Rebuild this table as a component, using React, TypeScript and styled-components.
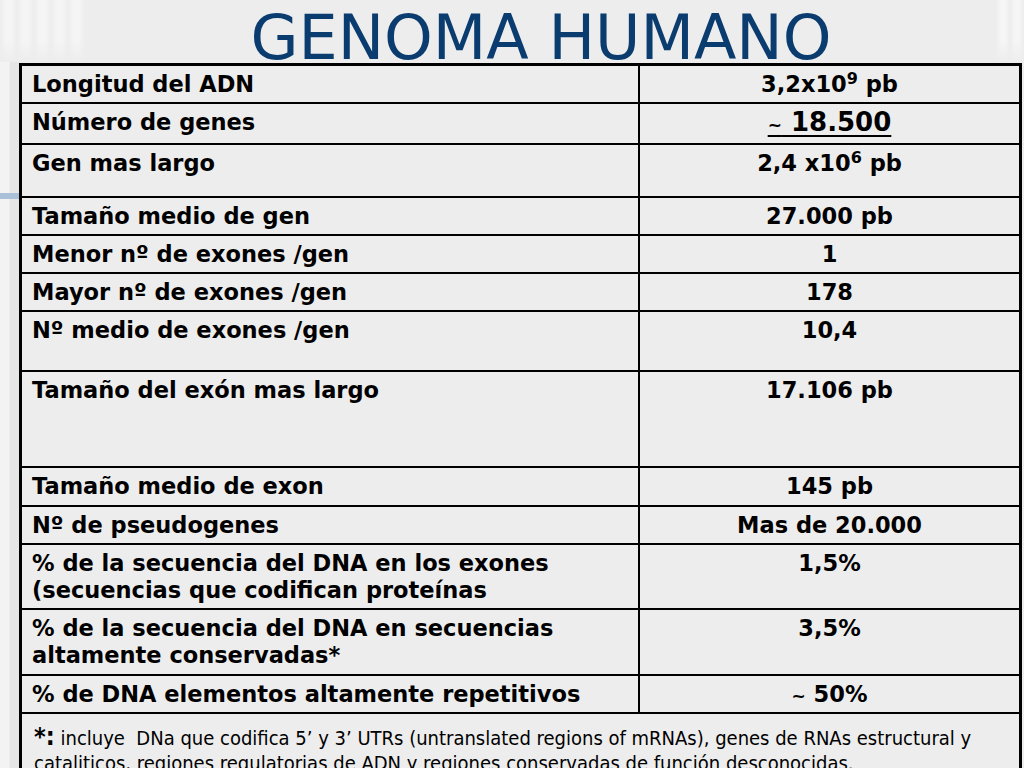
import styled, { createGlobalStyle } from 'styled-components';

type Row = {
    label: React.ReactNode;
    value: React.ReactNode;
    height: number;
};

const getRows = (): Row[] => [
    { label: 'Longitud del ADN', value: <>3,2x10<sup>9</sup> pb</>, height: 38 },
    {
        label: 'Número de genes',
        value: (
            <StyledBigValue>
                <StyledTilde>~</StyledTilde> 18.500
            </StyledBigValue>
        ),
        height: 41,
    },
    { label: 'Gen mas largo', value: <>2,4 x10<sup>6</sup> pb</>, height: 53 },
    { label: 'Tamaño medio de gen', value: '27.000 pb', height: 38 },
    { label: 'Menor nº de exones /gen', value: '1', height: 38 },
    { label: 'Mayor nº de exones /gen', value: '178', height: 38 },
    { label: 'Nº medio de exones /gen', value: '10,4', height: 60 },
    { label: 'Tamaño del exón mas largo', value: '17.106 pb', height: 96 },
    { label: 'Tamaño medio de exon', value: '145 pb', height: 39 },
    { label: 'Nº de pseudogenes', value: 'Mas de 20.000', height: 38 },
    {
        label: (
            <>
                % de la secuencia del DNA en los exones
                <br />
                (secuencias que codifican proteínas
            </>
        ),
        value: '1,5%',
        height: 65,
    },
    {
        label: (
            <>
                % de la secuencia del DNA en secuencias
                <br />
                altamente conservadas*
            </>
        ),
        value: '3,5%',
        height: 66,
    },
    {
        label: '% de DNA elementos altamente repetitivos',
        value: (
            <>
                <StyledTilde>~</StyledTilde> 50%
            </>
        ),
        height: 38,
    },
];

const App: React.FC = () => {
    const rows = getRows();

    return (
        <>
            <GlobalStyle />
            <StyledSlide>
                <StyledTitle>GENOMA HUMANO</StyledTitle>
                <StyledTable>
                    {rows.map((row, i) => (
                        <StyledRow key={i} height={row.height}>
                            <StyledLabelCell>{row.label}</StyledLabelCell>
                            <StyledValueCell>{row.value}</StyledValueCell>
                        </StyledRow>
                    ))}
                    <StyledNote>
                        <StyledStar>*:</StyledStar> incluye&nbsp; DNa que codifica 5’ y 3’ UTRs (untranslated regions of
                        mRNAs), genes de RNAs estructural y
                        <br />
                        cataliticos, regiones regulatorias de ADN y regiones conservadas de función desconocidas.
                    </StyledNote>
                </StyledTable>
            </StyledSlide>
        </>
    );
};

const GlobalStyle = createGlobalStyle`
    html, body {
        margin: 0;
        padding: 0;
        background: #ededed;
    }
`;

const StyledSlide = styled.div`
    position: relative;
    width: 1024px;
    height: 768px;
    overflow: hidden;
    background-color: #ededed;
    background-image:
        linear-gradient(#a9c0d8, #a9c0d8),
        linear-gradient(to bottom, rgba(237, 237, 237, 0) 40px, #ededed 62px),
        repeating-linear-gradient(to right, #ededed 0px, #f5f5f5 6px, #f5f5f5 11px, #ededed 17px),
        linear-gradient(to bottom, rgba(237, 237, 237, 0) 40px, #ededed 62px),
        repeating-linear-gradient(to right, #ededed 0px, #f6f6f6 5px, #f6f6f6 9px, #ededed 14px),
        linear-gradient(to right, #f3f3f3 0px, #f3f3f3 9px, #e6e6e6 10px, #e6e6e6 19px);
    background-size:
        19px 6px,
        86px 62px,
        86px 62px,
        28px 62px,
        28px 62px,
        19px 100%;
    background-position:
        0 193px,
        0 0,
        0 0,
        996px 0,
        996px 0,
        0 0;
    background-repeat: no-repeat;
`;

const StyledTitle = styled.h1`
    box-sizing: border-box;
    height: 63px;
    margin: 0;
    padding: 7px 0 0 58px;
    text-align: center;
    font-family: 'DejaVu Sans', Verdana, sans-serif;
    font-size: 62px;
    font-weight: normal;
    line-height: 1;
    color: #0b3c6f;
    white-space: nowrap;
`;

const StyledTable = styled.div`
    box-sizing: border-box;
    width: 1003px;
    margin-left: 19px;
    border: 3px solid #000;
    font-family: 'DejaVu Sans', Verdana, sans-serif;
    font-weight: bold;
    font-size: 22.5px;
    line-height: 27px;
    color: #000;

    sup {
        font-size: 16px;
        line-height: 0;
        vertical-align: 8px;
    }
`;

const StyledRow = styled.div<{ height: number }>`
    box-sizing: border-box;
    display: grid;
    grid-template-columns: 618px 1fr;
    height: ${({ height }) => height}px;
    border-bottom: 2px solid #000;
`;

const StyledLabelCell = styled.div`
    padding: 5px 0 0 10px;
    border-right: 2px solid #000;
    white-space: nowrap;
`;

const StyledValueCell = styled.div`
    padding-top: 5px;
    text-align: center;
    white-space: nowrap;
`;

const StyledBigValue = styled.span`
    font-size: 26px;
    text-decoration: underline;
    text-decoration-thickness: 2px;
    text-underline-offset: 4px;
`;

const StyledTilde = styled.span`
    font-size: 17px;
`;

const StyledNote = styled.div`
    padding: 12px 20px 0 12px;
    font-family: 'DejaVu Sans Condensed', 'DejaVu Sans', sans-serif;
    font-stretch: condensed;
    font-weight: normal;
    font-size: 20px;
    line-height: 25px;
    height: 70px;
    white-space: nowrap;
`;

const StyledStar = styled.span`
    font-family: 'DejaVu Sans', sans-serif;
    font-weight: bold;
    font-size: 25px;
    line-height: 0;
`;

export default App;
